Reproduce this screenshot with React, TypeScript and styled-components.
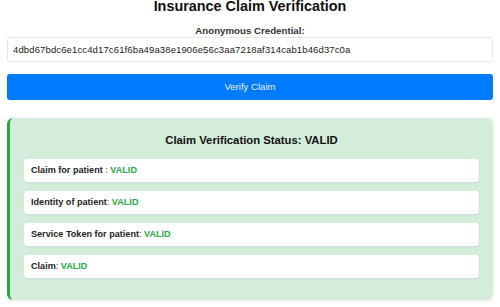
import styled, { createGlobalStyle } from 'styled-components';

const GlobalStyle = createGlobalStyle`
  html, body {
    margin: 0;
    padding: 0;
    background: #fff;
    font-family: "Liberation Sans", Arial, sans-serif;
    color: #333;
  }
  * { box-sizing: border-box; }
`;

const Page = styled.div`
  padding: 0 7px;
  height: 307px;
  overflow: hidden;
`;

const Title = styled.h2`
  margin: -2px 0 0;
  font-size: 14.4px;
  line-height: 16.5px;
  font-weight: bold;
  text-align: center;
  color: #111;
`;

const Label = styled.label`
  display: block;
  margin-top: 10px;
  font-size: 9.7px;
  line-height: 11px;
  font-weight: bold;
  text-align: center;
  color: #333;
`;

const Input = styled.input`
  display: block;
  width: 100%;
  height: 25px;
  margin-top: 1px;
  padding: 0 5px;
  border: 1px solid #e6e6e6;
  border-radius: 3px;
  font-family: inherit;
  font-size: 9.5px;
  letter-spacing: 0.13px;
  color: #222;
  background: #fff;
  outline: none;
`;

const Button = styled.button`
  display: block;
  width: 100%;
  height: 26px;
  margin-top: 12px;
  border: none;
  border-radius: 3px;
  background: #007bff;
  color: #e8f0ff;
  font-family: inherit;
  font-size: 9.6px;
  cursor: pointer;
`;

const StatusPanel = styled.div<{ $ok: boolean }>`
  margin-top: 18px;
  padding: 16px 14px 13px 14px;
  background: ${({ $ok }) => ($ok ? '#d4edda' : '#f8d7da')};
  border-left: 3px solid ${({ $ok }) => ($ok ? '#28a745' : '#dc3545')};
  border-radius: 6px;
  box-shadow: 0 1px 4px rgba(0, 0, 0, 0.08);
`;

const StatusTitle = styled.h3`
  margin: 0 0 12px;
  font-size: 11.3px;
  line-height: 13px;
  font-weight: bold;
  text-align: center;
  color: #111;
`;

const Item = styled.div`
  background: #fff;
  border-radius: 4px;
  padding: 6px 7px;
  margin-bottom: 9px;
  font-size: 9.1px;
  line-height: 11px;
  color: #555;
  box-shadow: 0 1px 2px rgba(0, 0, 0, 0.08);
`;

const ItemLabel = styled.strong`
  color: #222;
`;

const Result = styled.strong<{ $ok: boolean }>`
  color: ${({ $ok }) => ($ok ? '#28a745' : '#dc3545')};
`;

const checks = [
  { label: 'Claim for patient ', ok: true },
  { label: 'Identity of patient', ok: true },
  { label: 'Service Token for patient', ok: true },
  { label: 'Claim', ok: true },
];

export default function App() {
  const allOk = checks.every((c) => c.ok);
  return (
    <Page>
      <GlobalStyle />
      <Title>Insurance Claim Verification</Title>
      <Label htmlFor="cred">Anonymous Credential:</Label>
      <Input
        id="cred"
        readOnly
        value="4dbd67bdc6e1cc4d17c61f6ba49a38e1906e56c3aa7218af314cab1b46d37c0a"
      />
      <Button>Verify Claim</Button>

      <StatusPanel $ok={allOk}>
        <StatusTitle>Claim Verification Status: {allOk ? 'VALID' : 'INVALID'}</StatusTitle>
        {checks.map((c) => (
          <Item key={c.label}>
            <ItemLabel>{c.label}</ItemLabel>: <Result $ok={c.ok}>{c.ok ? 'VALID' : 'INVALID'}</Result>
          </Item>
        ))}
      </StatusPanel>
    </Page>
  );
}
